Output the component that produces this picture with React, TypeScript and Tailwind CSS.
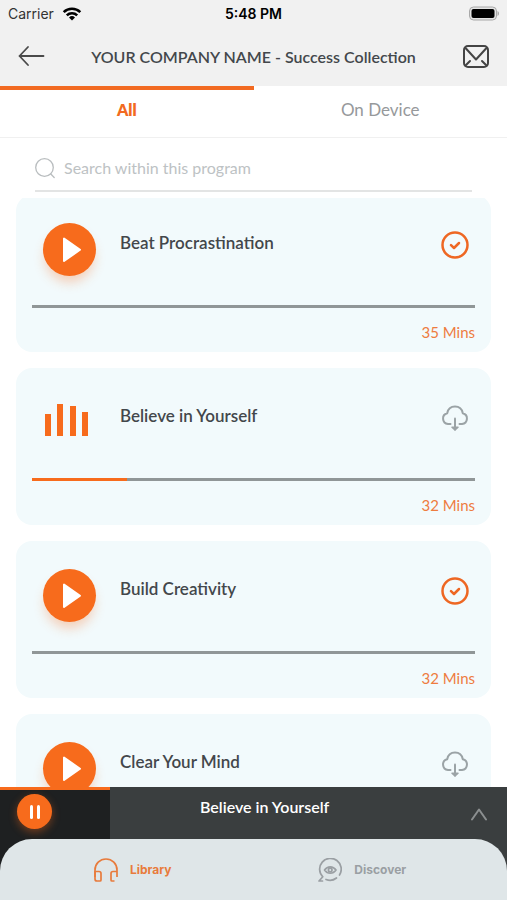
interface Track {
  id: number;
  title: string;
  minutes?: number;
  progress: number;
  downloaded: boolean;
  playing?: boolean;
}

const tracks: Track[] = [
  { id: 1, title: 'Beat Procrastination', minutes: 35, progress: 0, downloaded: true },
  { id: 2, title: 'Believe in Yourself', minutes: 32, progress: 21.5, downloaded: false, playing: true },
  { id: 3, title: 'Build Creativity', minutes: 32, progress: 0, downloaded: true },
  { id: 4, title: 'Clear Your Mind', progress: 0, downloaded: false },
];

export default function App() {
  return (
    <div className="flex h-screen flex-col overflow-hidden bg-white font-['Lato',sans-serif] text-[#43474b]">
      <header className="shrink-0 bg-[#f1f1f1]">
        <StatusBar />
        <TitleBar />
      </header>
      <Tabs />
      <SearchBox />
      <main className="min-h-0 flex-1 overflow-hidden px-4">
        <ul className="-mt-[3px] flex flex-col gap-4">
          {tracks.map((track) => (
            <TrackCard key={track.id} track={track} />
          ))}
        </ul>
      </main>
      <MiniPlayer title="Believe in Yourself" />
      <BottomNav />
    </div>
  );
}

function StatusBar() {
  return (
    <div className="grid h-7 grid-cols-3 items-center px-2 font-['Inter',sans-serif] text-sm text-black">
      <div className="flex items-center gap-2 text-[#333]">
        <span>Carrier</span>
        <svg className="h-4 w-5 text-black" viewBox="0 0 20 16" fill="none" stroke="currentColor" strokeWidth="2.6">
          <path d="M1.7 6.1a12 12 0 0 1 16.6 0" />
          <path d="M4.8 9.4a7.5 7.5 0 0 1 10.4 0" />
          <path d="M10 14.6 7 11.5a4.4 4.4 0 0 1 6 0z" fill="currentColor" stroke="none" />
        </svg>
      </div>
      <span className="text-center font-semibold">5:48 PM</span>
      <svg className="h-4 w-8 justify-self-end" viewBox="0 0 32 16">
        <rect x="2.5" y="1" width="27" height="13" rx="4" fill="#e4e4e4" stroke="#a8a8a8" />
        <rect x="4.5" y="3" width="23" height="9" rx="2" fill="#000" />
        <path d="M30.500 5c2 1 2 4 0 5z" fill="#a8a8a8" />
      </svg>
    </div>
  );
}

function TitleBar() {
  return (
    <div className="flex h-[58px] items-center justify-between px-4">
      <button aria-label="Back" className="w-8">
        <svg className="h-6 w-8" viewBox="0 0 32 24" fill="none" stroke="#4a4a4a" strokeWidth="1.8" strokeLinecap="round" strokeLinejoin="round">
          <path d="M27.5 11H3.5M12 2 3.5 11l8.5 9" />
        </svg>
      </button>
      <h1 className="text-base font-semibold">YOUR COMPANY NAME - Success Collection</h1>
      <button aria-label="Messages" className="flex w-8 justify-center">
        <svg className="h-6 w-7" viewBox="0 0 28 24" fill="none" stroke="#444" strokeWidth="2" strokeLinecap="round" strokeLinejoin="round">
          <rect x="3" y="1" width="24" height="21" rx="4" />
          <path d="m4.5 3 10.500 11.5L25.500 3M4.500 20.500l4.500-4.500M25.500 20.500l-4.500-4.500" />
        </svg>
      </button>
    </div>
  );
}

function Tabs() {
  return (
    <div role="tablist" className="grid h-[52px] shrink-0 grid-cols-2 border-b border-[#f0f0f0]">
      <button role="tab" aria-selected="true" className="border-t-4 border-[#f26a21] pb-2 text-base font-extrabold text-[#f26a21]">
        All
      </button>
      <button role="tab" aria-selected="false" className="border-t-4 border-transparent pb-2 text-[17px] text-[#96999b]">
        On Device
      </button>
    </div>
  );
}

function SearchBox() {
  return (
    <div className="shrink-0 px-[35px] pt-2 pb-1.5">
      <label className="flex h-[46px] items-center gap-2 border-b-2 border-[#e3e4e4]">
        <svg className="size-[21px] shrink-0" viewBox="0 0 21 21" fill="none" stroke="#b9bdbf" strokeWidth="1.3" strokeLinecap="round">
          <circle cx="9.5" cy="9.5" r="8.8" />
          <path d="m15.8 16 3.400 3.500" />
        </svg>
        <input
          type="text"
          aria-label="Search within this program"
          placeholder="Search within this program"
          className="min-w-0 flex-1 bg-transparent text-base outline-none placeholder:text-[#bdc2c4]"
        />
      </label>
    </div>
  );
}

function TrackCard({ track }: { track: Track }) {
  return (
    <li className="h-[157px] shrink-0 rounded-2xl bg-[#f2fafc] px-4">
      <div className="flex h-[110px] items-start pt-7">
        <div className="w-[88px] shrink-0 pl-[11px]">
          {track.playing ? <Equalizer /> : <PlayButton title={track.title} />}
        </div>
        <h2 className="flex-1 pt-2 text-[17px] leading-6 font-semibold">{track.title}</h2>
        <div className="pt-2 pr-1.5">
          {track.downloaded ? <DownloadedIcon /> : <DownloadButton title={track.title} />}
        </div>
      </div>
      <div className="h-[3px] bg-[#909697]">
        <div className="h-full bg-[#f76b1c]" style={{ width: `${track.progress}%` }} />
      </div>
      {track.minutes && (
        <p className="pt-3 text-right text-[15px] leading-6 text-[#ee7c3f]">{track.minutes} Mins</p>
      )}
    </li>
  );
}

function PlayButton({ title }: { title: string }) {
  return (
    <button
      aria-label={`Play ${title}`}
      className="flex size-[53px] items-center justify-center rounded-full bg-[#f76b1c] shadow-[0_8px_12px_-2px_rgba(247,107,28,0.3)]"
    >
      <svg className="size-[53px]" viewBox="0 0 53 53" fill="#fff" stroke="#fff" strokeWidth="2" strokeLinejoin="round">
        <path d="M21 15.500v22.500L37 26.800z" />
      </svg>
    </button>
  );
}

function Equalizer() {
  return (
    <svg className="h-[53px] w-[50px]" viewBox="0 0 50 53" fill="#f76b1c">
      <rect x="2" y="18" width="6" height="22" />
      <rect x="14" y="8" width="6" height="32" />
      <rect x="27" y="10" width="6" height="30" />
      <rect x="39" y="16" width="6" height="24" />
    </svg>
  );
}

function DownloadedIcon() {
  return (
    <svg className="size-7" viewBox="0 0 28 28" fill="none" stroke="#ee6723" strokeWidth="2.5" strokeLinecap="round" strokeLinejoin="round">
      <circle cx="14" cy="14" r="12.5" />
      <path d="m10 14.200 3 2.800 5-5" />
    </svg>
  );
}

function DownloadButton({ title }: { title: string }) {
  return (
    <button aria-label={`Download ${title}`} className="block">
      <svg className="size-7" viewBox="0 0 28 28" fill="none" stroke="#9ba3a6" strokeWidth="2" strokeLinecap="round" strokeLinejoin="round">
        <path d="M9.500 20H7a5.500 5.500 0 0 1-.8-10.800C7 5 10 2.500 14 2.500s7 2.500 7.800 6.700A5.500 5.500 0 0 1 21 20h-2.500" />
        <path d="M14 14.500v11" />
        <path d="M11 23.200h6L14 26z" fill="#9ba3a6" strokeWidth="1.5" />
      </svg>
    </button>
  );
}

function MiniPlayer({ title }: { title: string }) {
  return (
    <section aria-label="Now playing" className="flex h-[84px] shrink-0 bg-[#3a3e3f]">
      <div className="w-[110px] border-t-[3px] border-[#f76b1c] bg-[#1e2021] pt-1 pl-[17px]">
        <button
          aria-label="Pause"
          className="flex size-[35px] items-center justify-center gap-1 rounded-full bg-[#f76b1c] shadow-[0_3px_8px_rgba(247,107,28,0.4)]"
        >
          <span className="h-[14px] w-[3px] rounded-full bg-white" />
          <span className="h-[14px] w-[3px] rounded-full bg-white" />
        </button>
      </div>
      <div className="flex flex-1 items-start justify-between pr-4">
        <p className="pt-2 pl-[90px] text-base leading-6 font-semibold text-white">{title}</p>
        <button aria-label="Expand player" className="pt-5">
          <svg className="h-4 w-6" viewBox="0 0 24 16" fill="none" stroke="#8b8f90" strokeWidth="2" strokeLinecap="round" strokeLinejoin="round">
            <path d="m5 12.500 7-10 7 10" />
          </svg>
        </button>
      </div>
    </section>
  );
}

function BottomNav() {
  return (
    <nav className="relative -mt-8 grid h-[61px] shrink-0 grid-cols-2 rounded-t-[32px] bg-[#dfe6e8] font-['Inter',sans-serif] text-xs font-bold">
      <a href="#library" className="flex items-center justify-center gap-3 pl-3 text-[#e87b3c]">
        <svg className="size-6" viewBox="0 0 24 24" fill="none" stroke="currentColor" strokeWidth="1.7" strokeLinejoin="round">
          <path d="M1 19V12a11 11 0 0 1 22 0v7" />
          <path d="M1 13.500h4a2 2 0 0 1 2 2V22a1 1 0 0 1-1 1H3a2 2 0 0 1-2-2z" />
          <path d="M23 13.500h-4a2 2 0 0 0-2 2V22a1 1 0 0 0 1 1h2.500" />
        </svg>
        Library
      </a>
      <a href="#discover" className="flex items-center justify-center gap-3 pr-9 text-[#9a9fa3]">
        <svg className="size-6" viewBox="0 0 24 24" fill="none" stroke="currentColor" strokeWidth="1.7" strokeLinecap="round" strokeLinejoin="round">
          <path d="M4.500 23H1l3.800-4.200A10.800 10.800 0 1 1 21.500 17M8 21.500a10.800 10.800 0 0 0 10.500-1.500" />
          <path d="M6.500 12c3-4.300 8.500-4.300 11.500 0-3 4.300-8.500 4.300-11.500 0z" />
          <circle cx="12.200" cy="12" r="1.8" />
        </svg>
        Discover
      </a>
    </nav>
  );
}
